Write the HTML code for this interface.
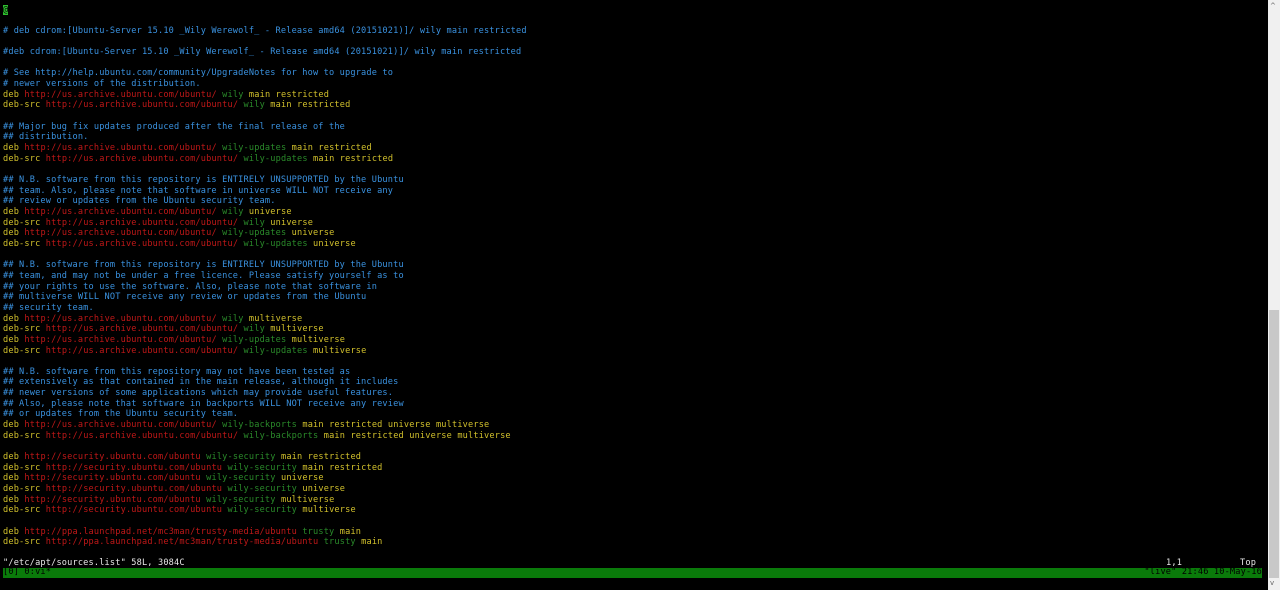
<!DOCTYPE html>
<html><head><style>
html,body{margin:0;padding:0;background:#000;width:1280px;height:590px;overflow:hidden}
pre{position:absolute;left:3px;top:4.5px;margin:0;font-family:"DejaVu Sans Mono","Liberation Mono",monospace;font-size:8.6px;letter-spacing:0.17px;line-height:10.65px;color:#ddd;white-space:pre}
.c{color:#3a92e0}.y{color:#d2c12c}.r{color:#c01818}.g{color:#2a8a2a}.w{color:#e8e8e8}
.cur{background:#2ec02e;color:#000}
#bar{position:absolute;left:3px;top:568px;width:1259px;height:10px;background:#0a7a0a}
#bar span{position:absolute;top:-1px;font-family:"DejaVu Sans Mono","Liberation Mono",monospace;font-size:8.6px;letter-spacing:0.17px;line-height:11px;color:#000}
.st{position:absolute;top:557.5px;font-family:"DejaVu Sans Mono","Liberation Mono",monospace;font-size:8.6px;letter-spacing:0.17px;line-height:10.65px;color:#e8e8e8}
#sb{position:absolute;left:1268px;top:0;width:12px;height:590px;background:#f0f0f0}
#th{position:absolute;left:1269px;top:310px;width:10px;height:268px;background:#c8c8c8}
.ar{position:absolute;left:1270px;font-size:7px;color:#666;font-family:"DejaVu Sans",sans-serif}
</style></head><body>
<pre><span class="cur">@</span>

<span class="c"># deb cdrom:[Ubuntu-Server 15.10 _Wily Werewolf_ - Release amd64 (20151021)]/ wily main restricted</span>

<span class="c">#deb cdrom:[Ubuntu-Server 15.10 _Wily Werewolf_ - Release amd64 (20151021)]/ wily main restricted</span>

<span class="c"># See http://help.ubuntu.com/community/UpgradeNotes for how to upgrade to
# newer versions of the distribution.</span>
<span class="y">deb</span> <span class="r">http://us.archive.ubuntu.com/ubuntu/</span> <span class="g">wily</span> <span class="y">main restricted</span>
<span class="y">deb-src</span> <span class="r">http://us.archive.ubuntu.com/ubuntu/</span> <span class="g">wily</span> <span class="y">main restricted</span>

<span class="c">## Major bug fix updates produced after the final release of the
## distribution.</span>
<span class="y">deb</span> <span class="r">http://us.archive.ubuntu.com/ubuntu/</span> <span class="g">wily-updates</span> <span class="y">main restricted</span>
<span class="y">deb-src</span> <span class="r">http://us.archive.ubuntu.com/ubuntu/</span> <span class="g">wily-updates</span> <span class="y">main restricted</span>

<span class="c">## N.B. software from this repository is ENTIRELY UNSUPPORTED by the Ubuntu
## team. Also, please note that software in universe WILL NOT receive any
## review or updates from the Ubuntu security team.</span>
<span class="y">deb</span> <span class="r">http://us.archive.ubuntu.com/ubuntu/</span> <span class="g">wily</span> <span class="y">universe</span>
<span class="y">deb-src</span> <span class="r">http://us.archive.ubuntu.com/ubuntu/</span> <span class="g">wily</span> <span class="y">universe</span>
<span class="y">deb</span> <span class="r">http://us.archive.ubuntu.com/ubuntu/</span> <span class="g">wily-updates</span> <span class="y">universe</span>
<span class="y">deb-src</span> <span class="r">http://us.archive.ubuntu.com/ubuntu/</span> <span class="g">wily-updates</span> <span class="y">universe</span>

<span class="c">## N.B. software from this repository is ENTIRELY UNSUPPORTED by the Ubuntu
## team, and may not be under a free licence. Please satisfy yourself as to
## your rights to use the software. Also, please note that software in
## multiverse WILL NOT receive any review or updates from the Ubuntu
## security team.</span>
<span class="y">deb</span> <span class="r">http://us.archive.ubuntu.com/ubuntu/</span> <span class="g">wily</span> <span class="y">multiverse</span>
<span class="y">deb-src</span> <span class="r">http://us.archive.ubuntu.com/ubuntu/</span> <span class="g">wily</span> <span class="y">multiverse</span>
<span class="y">deb</span> <span class="r">http://us.archive.ubuntu.com/ubuntu/</span> <span class="g">wily-updates</span> <span class="y">multiverse</span>
<span class="y">deb-src</span> <span class="r">http://us.archive.ubuntu.com/ubuntu/</span> <span class="g">wily-updates</span> <span class="y">multiverse</span>

<span class="c">## N.B. software from this repository may not have been tested as
## extensively as that contained in the main release, although it includes
## newer versions of some applications which may provide useful features.
## Also, please note that software in backports WILL NOT receive any review
## or updates from the Ubuntu security team.</span>
<span class="y">deb</span> <span class="r">http://us.archive.ubuntu.com/ubuntu/</span> <span class="g">wily-backports</span> <span class="y">main restricted universe multiverse</span>
<span class="y">deb-src</span> <span class="r">http://us.archive.ubuntu.com/ubuntu/</span> <span class="g">wily-backports</span> <span class="y">main restricted universe multiverse</span>

<span class="y">deb</span> <span class="r">http://security.ubuntu.com/ubuntu</span> <span class="g">wily-security</span> <span class="y">main restricted</span>
<span class="y">deb-src</span> <span class="r">http://security.ubuntu.com/ubuntu</span> <span class="g">wily-security</span> <span class="y">main restricted</span>
<span class="y">deb</span> <span class="r">http://security.ubuntu.com/ubuntu</span> <span class="g">wily-security</span> <span class="y">universe</span>
<span class="y">deb-src</span> <span class="r">http://security.ubuntu.com/ubuntu</span> <span class="g">wily-security</span> <span class="y">universe</span>
<span class="y">deb</span> <span class="r">http://security.ubuntu.com/ubuntu</span> <span class="g">wily-security</span> <span class="y">multiverse</span>
<span class="y">deb-src</span> <span class="r">http://security.ubuntu.com/ubuntu</span> <span class="g">wily-security</span> <span class="y">multiverse</span>

<span class="y">deb</span> <span class="r">http://ppa.launchpad.net/mc3man/trusty-media/ubuntu</span> <span class="g">trusty</span> <span class="y">main</span>
<span class="y">deb-src</span> <span class="r">http://ppa.launchpad.net/mc3man/trusty-media/ubuntu</span> <span class="g">trusty</span> <span class="y">main</span></pre>
<div class="st" style="left:3px">"/etc/apt/sources.list" 58L, 3084C</div>
<div class="st" style="left:1166px">1,1</div>
<div class="st" style="left:1240px">Top</div>
<div id="bar"><span style="left:0">[0] 0:vi*</span><span style="right:0">"live" 21:46 10-May-16</span></div>
<div id="sb"></div><div id="th"></div>
<div class="ar" style="top:2px">^</div>
<div class="ar" style="top:579px">v</div>
</body></html>
